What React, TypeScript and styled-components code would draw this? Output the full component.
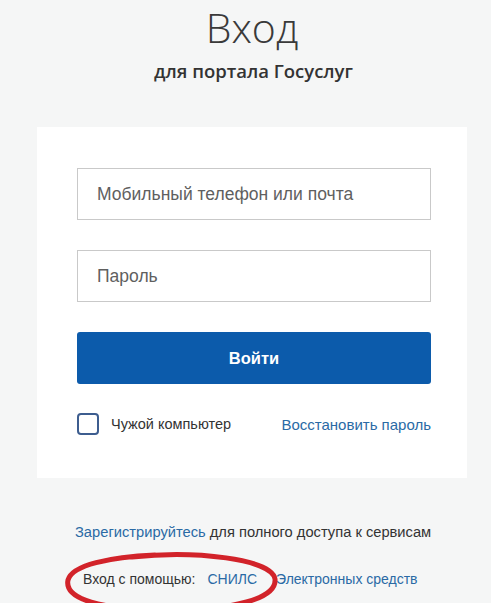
import styled, { createGlobalStyle } from "styled-components";

const Global = createGlobalStyle`
  html, body {
    margin: 0;
    padding: 0;
    background: #f5f6f6;
  }
  body {
    font-family: "Liberation Sans", Arial, sans-serif;
    color: #333;
  }
`;

const Page = styled.div`
  width: 491px;
  height: 603px;
  overflow: hidden;
  position: relative;
`;

const Title = styled.h1`
  margin: 0;
  padding-top: 2px;
  text-align: center;
  font-family: "Open Sans", sans-serif;
  font-weight: 300;
  font-size: 41px;
  line-height: 50px;
  color: #3a3a3a;
  padding-left: 13px;
`;

const Subtitle = styled.div`
  margin-top: 8px;
  text-align: center;
  font-family: "Open Sans", sans-serif;
  font-weight: 600;
  font-size: 18.5px;
  line-height: 22px;
  color: #333;
  padding-left: 16px;
`;

const Card = styled.div`
  margin: 45px 24px 0 37px;
  background: #fff;
  padding: 41px 36px 40px 40px;
  display: flex;
  flex-direction: column;
  height: 270px;
`;

const Field = styled.div<{ $gap: number }>`
  height: 52px;
  border: 1px solid #c9c9c9;
  box-sizing: border-box;
  display: flex;
  align-items: center;
  padding-left: 19px;
  font-size: 17.5px;
  color: #5f5f5f;
  margin-bottom: ${(p) => p.$gap}px;
`;

const Submit = styled.button`
  height: 52px;
  border: none;
  border-radius: 3px;
  background: #0c5bab;
  color: #fff;
  font-family: "Liberation Sans", Arial, sans-serif;
  font-size: 16.5px;
  font-weight: 700;
  padding: 0;
`;

const Row = styled.div`
  margin-top: 29px;
  display: flex;
  align-items: center;
  justify-content: space-between;
  font-size: 15px;
`;

const CheckLabel = styled.label`
  display: flex;
  align-items: center;
  gap: 12px;
  color: #333;
  font-size: 14.5px;
`;

const Box = styled.span`
  width: 22px;
  height: 22px;
  box-sizing: border-box;
  border: 2px solid #3d5d8f;
  border-radius: 4px;
`;

const Link = styled.a`
  color: #2a6aa5;
  text-decoration: none;
`;

const Footer = styled.div`
  padding-left: 75px;
  margin-top: 45px;
  font-size: 14px;
  color: #333;
`;

const Line = styled.div<{ $gap: number }>`
  font-size: 14.7px;
  line-height: 18px;
  margin-bottom: ${(p) => p.$gap}px;
`;

const Methods = styled.div`
  display: flex;
  padding-left: 8px;
  line-height: 18px;
`;

const MethodLink = styled(Link)<{ $gap: number }>`
  margin-left: ${(p) => p.$gap}px;
`;

const Ellipse = styled.svg`
  position: absolute;
  left: 60px;
  top: 549px;
  pointer-events: none;
`;

export default function App() {
  return (
    <Page>
      <Global />
      <Title>Вход</Title>
      <Subtitle>для портала Госуслуг</Subtitle>
      <Card>
        <Field $gap={30}>Мобильный телефон или почта</Field>
        <Field $gap={30}>Пароль</Field>
        <Submit>Войти</Submit>
        <Row>
          <CheckLabel>
            <Box />
            Чужой компьютер
          </CheckLabel>
          <Link>Восстановить пароль</Link>
        </Row>
      </Card>
      <Footer>
        <Line $gap={29}>
          <Link>Зарегистрируйтесь</Link> для полного доступа к сервисам
        </Line>
        <Methods>
          Вход с помощью:
          <MethodLink $gap={12}>СНИЛС</MethodLink>
          <MethodLink $gap={19}>Электронных средств</MethodLink>
        </Methods>
      </Footer>
      <Ellipse width="230" height="70" viewBox="0 0 230 70">
        <path
          d="M72 8 C 135 1, 212 10, 215 30 C 217 50, 172 61, 110 61 C 40 61, 4 50, 8 31 C 12 16, 50 8, 95 6"
          fill="none"
          stroke="#d2232a"
          strokeWidth="5"
          strokeLinecap="round"
        />
      </Ellipse>
    </Page>
  );
}
